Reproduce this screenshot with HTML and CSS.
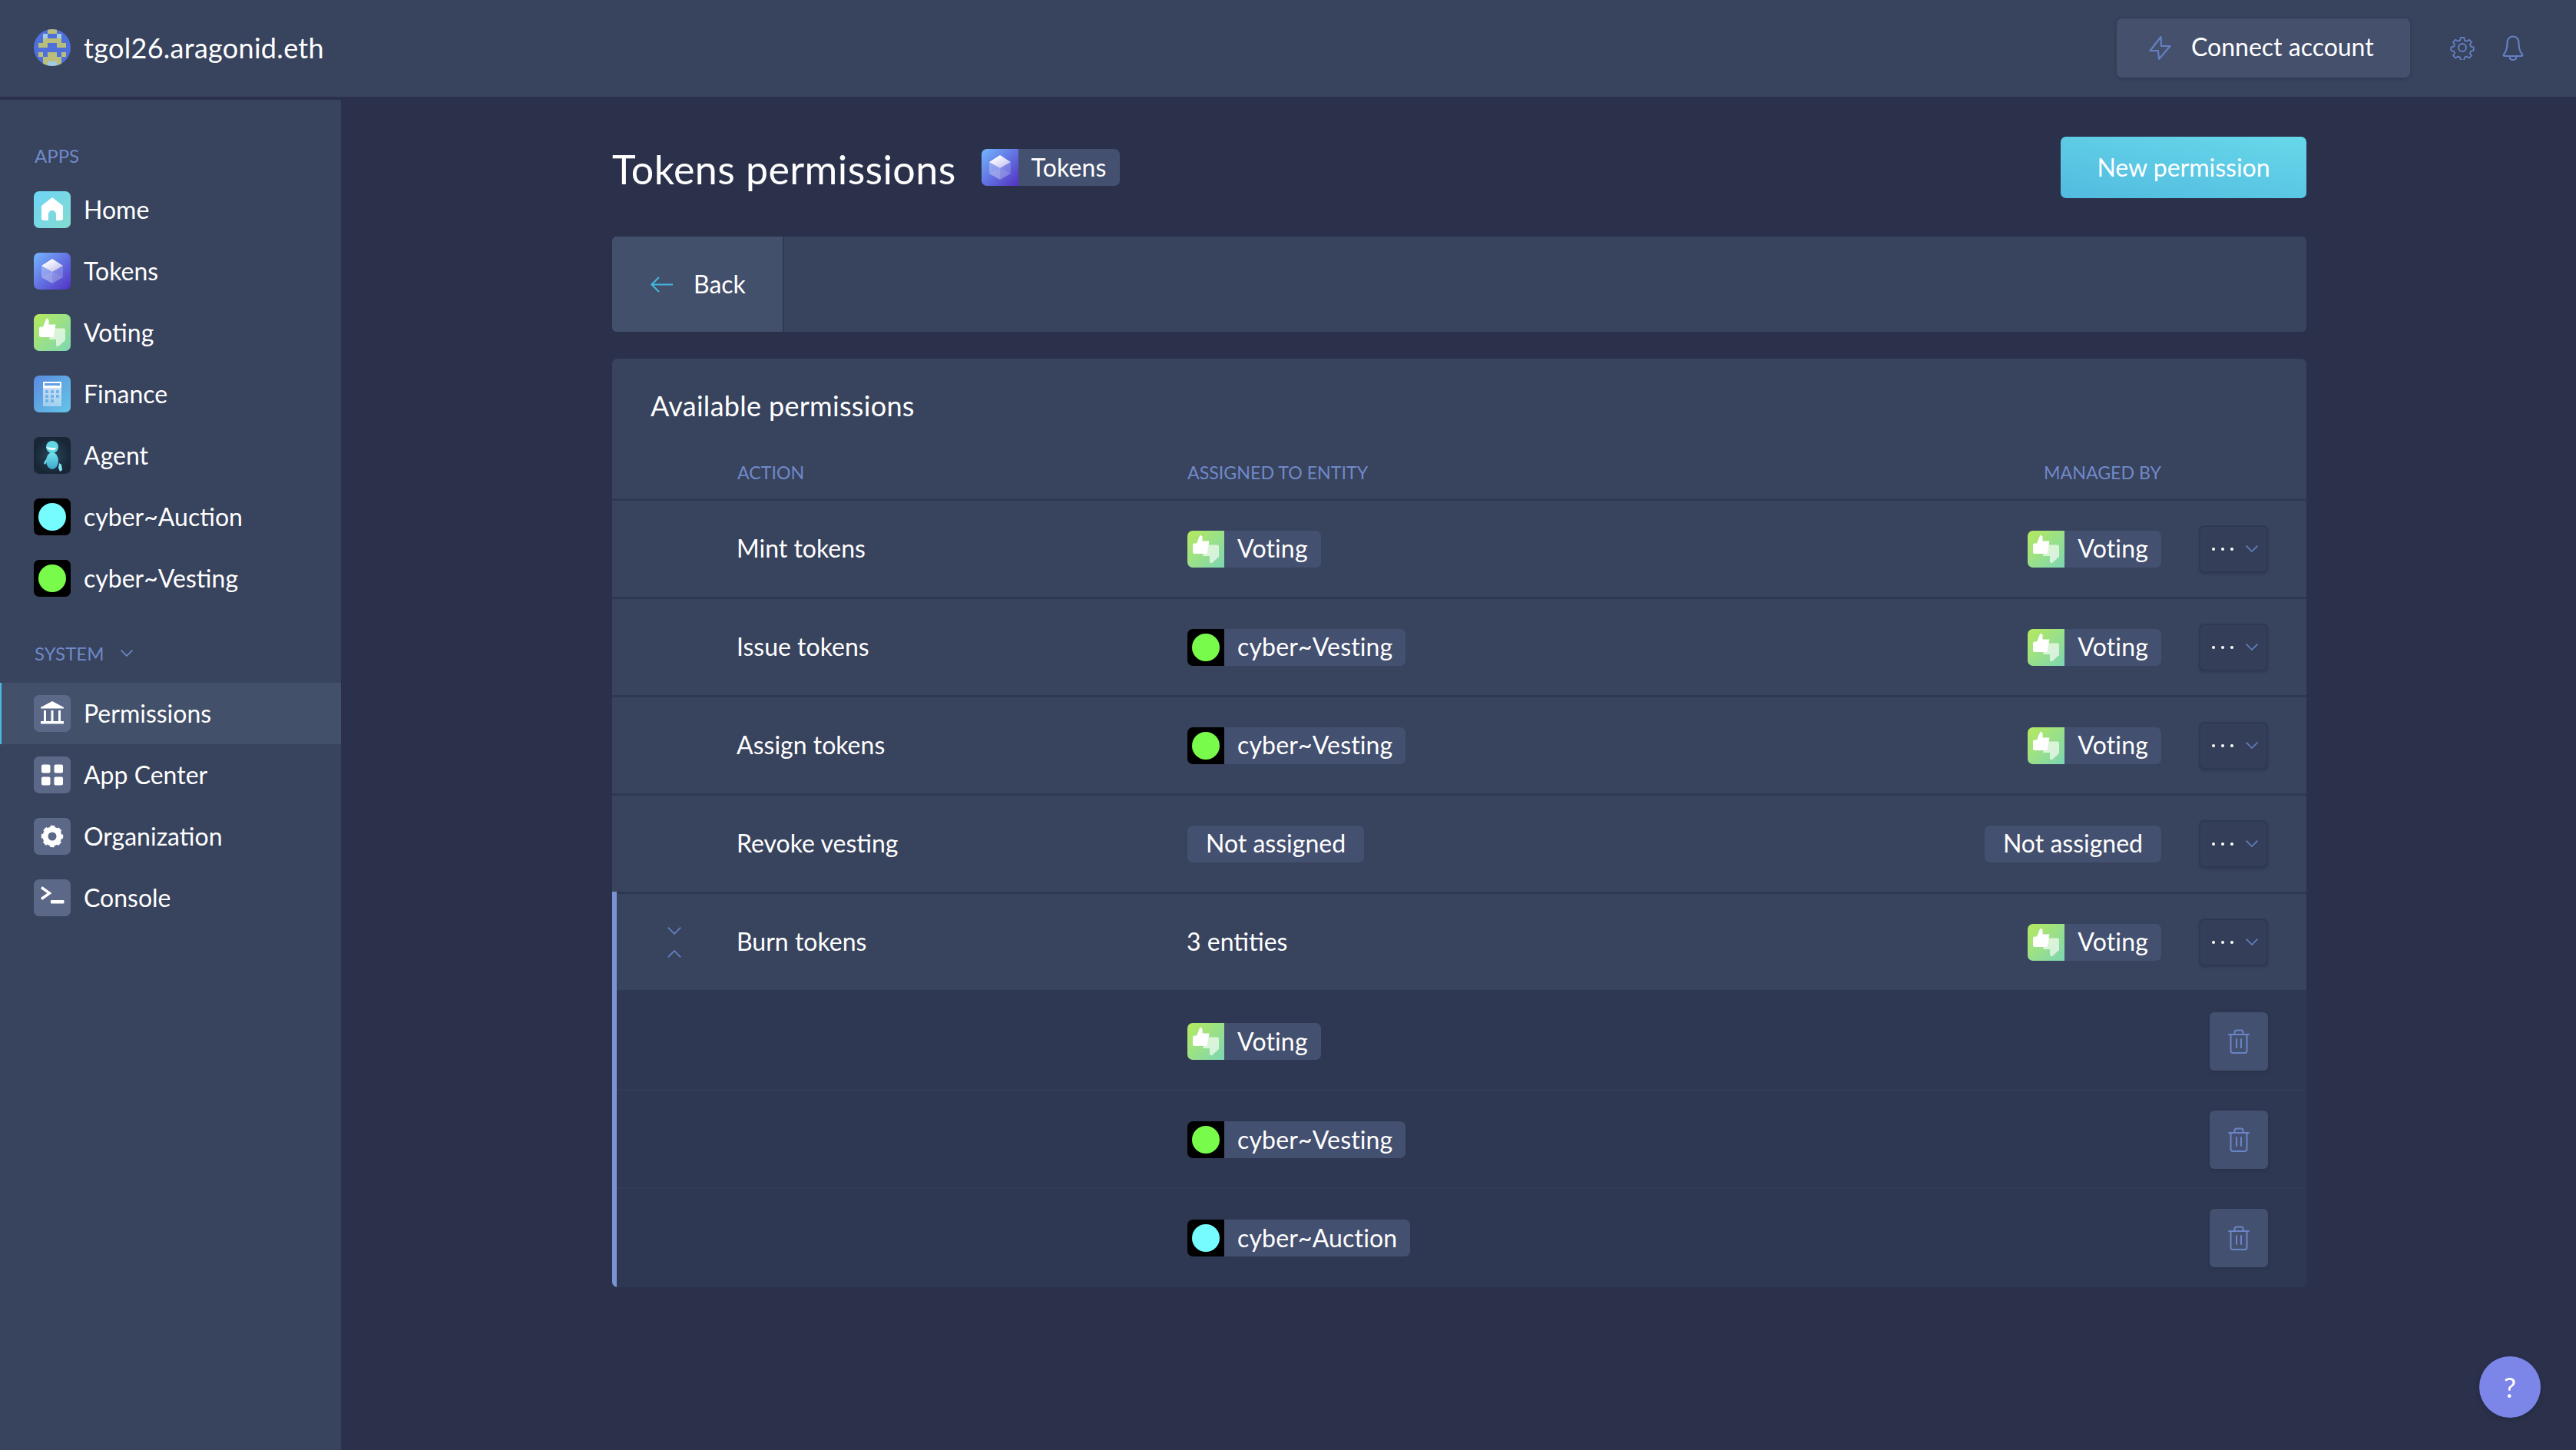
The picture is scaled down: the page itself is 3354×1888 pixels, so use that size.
FILE: index.html
```html
<!DOCTYPE html>
<html lang="en">
<head>
  <meta charset="UTF-8" />
  <title>Tokens permissions</title>
  <link rel="stylesheet" href="styles.css">
</head>
<body>
  <svg class="sprite" xmlns="http://www.w3.org/2000/svg">
    <defs>
      <linearGradient id="g-home" x1="0" y1="0" x2="1" y2="1"><stop offset="0" stop-color="#6dd5f6"/><stop offset="1" stop-color="#84dcd0"/></linearGradient>
      <linearGradient id="g-tokens" x1="0" y1="0" x2="1" y2="1"><stop offset="0" stop-color="#75b6ff"/><stop offset="1" stop-color="#5130c4"/></linearGradient>
      <linearGradient id="g-cube" x1="0" y1="0" x2="1" y2="1"><stop offset="0.2" stop-color="#fff"/><stop offset="1" stop-color="#b9b6ee"/></linearGradient>
      <linearGradient id="g-voting" x1="0" y1="0" x2="1" y2="1"><stop offset="0" stop-color="#b6ea5c"/><stop offset="1" stop-color="#7dd6b4"/></linearGradient>
      <linearGradient id="g-finance" x1="0" y1="0" x2="1" y2="1"><stop offset="0" stop-color="#5a8ae0"/><stop offset="1" stop-color="#64c6e6"/></linearGradient>
      <linearGradient id="g-calc" x1="0" y1="0" x2="0" y2="1"><stop offset="0" stop-color="#fff" stop-opacity=".75"/><stop offset="1" stop-color="#fff" stop-opacity=".4"/></linearGradient>
      <radialGradient id="g-agent"><stop offset="0" stop-color="#28475a"/><stop offset="1" stop-color="#182636"/></radialGradient>
      <linearGradient id="g-robot" x1="0" y1="0" x2="0" y2="1"><stop offset="0" stop-color="#6fe3ee"/><stop offset="1" stop-color="#3fa8cc"/></linearGradient>
    </defs>
    <symbol id="app-home" viewBox="0 0 48 48">
      <rect width="48" height="48" fill="url(#g-home)"/>
      <path fill="#fff" d="M24 8l14 11v16q0 3-3 3h-6v-8a5 5 0 0 0-10 0v8h-6q-3 0-3-3V19z"/>
    </symbol>
    <symbol id="app-tokens" viewBox="0 0 48 48">
      <rect width="48" height="48" fill="url(#g-tokens)"/>
      <path fill="url(#g-cube)" d="M24 8l14 9-14 8-14-8z"/>
      <path fill="#fff" fill-opacity=".28" d="M10 17l14 8v15l-14-8z"/>
      <path fill="#fff" fill-opacity=".18" d="M38 17l-14 8v15l14-8z"/>
      <path fill="#fff" fill-opacity=".1" d="M24 25l14 7-14 8-14-8z"/>
    </symbol>
    <symbol id="app-voting" viewBox="0 0 48 48">
      <rect width="48" height="48" fill="url(#g-voting)"/>
      <path fill="#fff" fill-opacity=".65" d="M23 18.500h16q2 0 2 2V34l-9.500 8.500-2.500-1.500V33H20z"/>
      <path fill="#fff" d="M16.500 5.500L19.500 7.500v6H28.500L25.500 30H9q-2 0-2-2V18.500q0-2 2-2h3z"/>
    </symbol>
    <symbol id="app-finance" viewBox="0 0 48 48">
      <rect width="48" height="48" fill="url(#g-finance)"/>
      <rect x="12" y="8" width="24" height="32" fill="url(#g-calc)"/>
      <path fill="#fff" d="M12 8h24v8H12z"/>
      <path fill="#5f9fe2" d="M14 10h20v3H14z"/>
      <path fill="#5ea6e2" fill-opacity=".75" d="M15 19h4v4h-4zM22 19h4v4h-4zM29 19h4v4h-4zM15 25h4v4h-4zM22 25h4v4h-4zM29 25h4v4h-4zM15 31h4v4h-4zM22 31h4v4h-4z"/>
    </symbol>
    <symbol id="app-agent" viewBox="0 0 48 48">
      <rect width="48" height="48" fill="url(#g-agent)"/>
      <ellipse cx="24" cy="31" rx="8" ry="11" fill="url(#g-robot)"/>
      <circle cx="24" cy="13" r="8" fill="#62d8e6"/>
      <path fill="#fff" d="M16 13q4 1 13 1-1 3-4 3-7 0-9-4z"/>
      <path fill="#7fe6f0" d="M13 34l3-5 1 1-2 6zM33 34l3 2 1 7-3 2-2-5z"/>
    </symbol>
    <symbol id="app-auction" viewBox="0 0 48 48">
      <rect width="48" height="48" fill="#000"/>
      <circle cx="24" cy="24" r="18" fill="#74fcff"/>
    </symbol>
    <symbol id="app-vesting" viewBox="0 0 48 48">
      <rect width="48" height="48" fill="#000"/>
      <circle cx="24" cy="24" r="18" fill="#79fb4c"/>
    </symbol>
    <symbol id="sys-permissions" viewBox="0 0 48 48">
      <path fill="#fff" d="M24 8l15 8v1.500H9V16zM13 20h3v14h-3zM22.500 20h3v14h-3zM32 20h3v14h-3zM9 34h30v3.500H9z"/>
    </symbol>
    <symbol id="sys-appcenter" viewBox="0 0 48 48">
      <rect x="10" y="10.500" width="11.500" height="11" rx="2" fill="#fff"/>
      <rect x="26.500" y="10.500" width="11.500" height="11" rx="2" fill="#fff"/>
      <rect x="10" y="26.500" width="11.500" height="11" rx="2" fill="#fff"/>
      <rect x="26.500" y="26.500" width="11.500" height="11" rx="2" fill="#fff"/>
    </symbol>
    <symbol id="sys-organization" viewBox="0 0 48 48">
      <circle cx="24" cy="24" r="9" fill="none" stroke="#fff" stroke-width="7"/>
      <circle cx="24" cy="24" r="12.500" fill="none" stroke="#fff" stroke-width="3.500" stroke-dasharray="5.600 4.220" stroke-dashoffset="2.800"/>
    </symbol>
    <symbol id="sys-console" viewBox="0 0 48 48">
      <path fill="none" stroke="#fff" stroke-width="3.400" d="M10 10.500L20.500 18 10 25.500"/>
      <rect x="22" y="27" width="17.500" height="4.500" rx="1" fill="#fff"/>
    </symbol>
    <symbol id="ico-caret" viewBox="0 0 16 9">
      <path fill="none" stroke="currentColor" stroke-width="1.600" d="M.6.6L8 8 15.400.6"/>
    </symbol>
    <symbol id="ico-trash" viewBox="0 0 28 32">
      <path fill="none" stroke="currentColor" stroke-width="2" stroke-linecap="round" d="M8.500 7V4q0-2.500 2.500-2.500h6q2.500 0 2.500 2.500v3M1 7h26M3.500 7v21q0 3 3 3h15q3 0 3-3V7M11 13v11M17 13v11"/>
    </symbol>
  </svg>

  <header class="topbar">
    <div class="identity">
      <svg class="identicon" viewBox="0 0 8 8" shape-rendering="crispEdges">
        <path fill="#4f6fda" d="M0 0h8v8H0z"/>
        <path fill="#b9bf7a" d="M3 0h2v1H3zM2 2h4v1H2zM1 3h2v1H1zM5 3h2v1H5zM1 5h1v1H1zM3 5h2v1H3zM6 5h1v1H6zM2 6h4v1H2zM2 7h1v1H2zM5 7h1v1H5z"/>
        <path fill="#a3cbe2" d="M2 1h1v1H2zM5 1h1v1H5zM3 7h2v1H3z"/>
      </svg>
      <span class="org-name">tgol26.aragonid.eth</span>
    </div>
    <div class="top-actions">
      <button class="connect">
        <svg class="connect-icon" viewBox="0 0 29 33"><path fill="none" stroke="currentColor" stroke-width="2.200" stroke-linejoin="round" d="M15.500 2L1.500 20h10.500L13 31 27.500 14H16z"/></svg>
        <span>Connect account</span>
      </button>
      <svg class="top-icon gear" viewBox="0 0 32 32"><g fill="none" stroke="currentColor" stroke-width="2" stroke-linejoin="round"><circle cx="16" cy="16" r="5"/><path d="M13.500 1.500h5l.8 4 3 1.300 3.500-2.300 3.500 3.500-2.300 3.500 1.300 3 4 .8v5l-4 .8-1.300 3 2.300 3.500-3.500 3.500-3.500-2.300-3 1.300-.8 4h-5l-.8-4-3-1.300-3.500 2.300-3.500-3.500 2.300-3.500-1.300-3-4-.8v-5l4-.8 1.300-3-2.300-3.500 3.500-3.500 3.500 2.300 3-1.300z" transform="translate(1.600 1.600) scale(.9)"/></g></svg>
      <svg class="top-icon bell" viewBox="0 0 28 33"><path fill="none" stroke="currentColor" stroke-width="2.200" stroke-linejoin="round" d="M14 1.500c-5 0-7.500 4-7.500 9 0 8-2 11-4.500 14.500-.6 1-.3 2 1 2h22c1.300 0 1.600-1 1-2-2.500-3.500-4.500-6.500-4.500-14.500 0-5-2.500-9-7.500-9zM9.500 27c0 3.500 2 5 4.500 5s4.500-1.500 4.500-5"/></svg>
    </div>
  </header>

  <div class="layout">
    <aside class="sidebar">
      <div class="nav-label first">APPS</div>
      <a class="nav-item"><svg class="tile"><use href="#app-home"/></svg><span>Home</span></a>
      <a class="nav-item"><svg class="tile"><use href="#app-tokens"/></svg><span>Tokens</span></a>
      <a class="nav-item"><svg class="tile"><use href="#app-voting"/></svg><span>Voting</span></a>
      <a class="nav-item"><svg class="tile"><use href="#app-finance"/></svg><span>Finance</span></a>
      <a class="nav-item"><svg class="tile"><use href="#app-agent"/></svg><span>Agent</span></a>
      <a class="nav-item"><svg class="tile"><use href="#app-auction"/></svg><span>cyber~Auction</span></a>
      <a class="nav-item"><svg class="tile"><use href="#app-vesting"/></svg><span>cyber~Vesting</span></a>
      <div class="nav-label system">SYSTEM <svg class="nav-caret"><use href="#ico-caret"/></svg></div>
      <a class="nav-item active"><svg class="tile sys"><use href="#sys-permissions"/></svg><span>Permissions</span></a>
      <a class="nav-item"><svg class="tile sys"><use href="#sys-appcenter"/></svg><span>App Center</span></a>
      <a class="nav-item"><svg class="tile sys"><use href="#sys-organization"/></svg><span>Organization</span></a>
      <a class="nav-item"><svg class="tile sys"><use href="#sys-console"/></svg><span>Console</span></a>
    </aside>

    <main class="content">
      <div class="wrap">
        <div class="page-head">
          <h1>Tokens permissions</h1>
          <span class="badge"><svg class="tile"><use href="#app-tokens"/></svg><span class="badge-text">Tokens</span></span>
          <button class="new-permission">New permission</button>
        </div>

        <div class="back-bar">
          <button class="back">
            <svg class="back-arrow" viewBox="0 0 29 21"><path fill="none" stroke="currentColor" stroke-width="2.200" d="M29 10.500H2M11 1L1.500 10.500 11 20"/></svg>
            <span>Back</span>
          </button>
        </div>

        <section class="card">
          <h2>Available permissions</h2>
          <div class="row head-row">
            <div></div>
            <div class="th">ACTION</div>
            <div class="th">ASSIGNED TO ENTITY</div>
            <div class="th right">MANAGED BY</div>
            <div></div>
          </div>

          <div class="row">
            <div></div>
            <div class="cell-text">Mint tokens</div>
            <div><span class="badge"><svg class="tile"><use href="#app-voting"/></svg><span class="badge-text">Voting</span></span></div>
            <div class="right"><span class="badge"><svg class="tile"><use href="#app-voting"/></svg><span class="badge-text">Voting</span></span></div>
            <div><button class="menu"><span class="dots"><i></i><i></i><i></i></span><svg class="menu-caret"><use href="#ico-caret"/></svg></button></div>
          </div>
          <div class="row">
            <div></div>
            <div class="cell-text">Issue tokens</div>
            <div><span class="badge"><svg class="tile"><use href="#app-vesting"/></svg><span class="badge-text">cyber~Vesting</span></span></div>
            <div class="right"><span class="badge"><svg class="tile"><use href="#app-voting"/></svg><span class="badge-text">Voting</span></span></div>
            <div><button class="menu"><span class="dots"><i></i><i></i><i></i></span><svg class="menu-caret"><use href="#ico-caret"/></svg></button></div>
          </div>
          <div class="row">
            <div></div>
            <div class="cell-text">Assign tokens</div>
            <div><span class="badge"><svg class="tile"><use href="#app-vesting"/></svg><span class="badge-text">cyber~Vesting</span></span></div>
            <div class="right"><span class="badge"><svg class="tile"><use href="#app-voting"/></svg><span class="badge-text">Voting</span></span></div>
            <div><button class="menu"><span class="dots"><i></i><i></i><i></i></span><svg class="menu-caret"><use href="#ico-caret"/></svg></button></div>
          </div>
          <div class="row">
            <div></div>
            <div class="cell-text">Revoke vesting</div>
            <div><span class="badge"><span class="badge-text">Not assigned</span></span></div>
            <div class="right"><span class="badge"><span class="badge-text">Not assigned</span></span></div>
            <div><button class="menu"><span class="dots"><i></i><i></i><i></i></span><svg class="menu-caret"><use href="#ico-caret"/></svg></button></div>
          </div>

          <div class="expanded">
            <div class="row">
              <div class="toggle">
                <svg class="toggle-caret"><use href="#ico-caret"/></svg>
                <svg class="toggle-caret up"><use href="#ico-caret"/></svg>
              </div>
              <div class="cell-text">Burn tokens</div>
              <div class="cell-text">3 entities</div>
              <div class="right"><span class="badge"><svg class="tile"><use href="#app-voting"/></svg><span class="badge-text">Voting</span></span></div>
              <div><button class="menu"><span class="dots"><i></i><i></i><i></i></span><svg class="menu-caret"><use href="#ico-caret"/></svg></button></div>
            </div>
            <div class="sub-row">
              <div></div>
              <div></div>
              <div><span class="badge"><svg class="tile"><use href="#app-voting"/></svg><span class="badge-text">Voting</span></span></div>
              <div></div>
              <div class="right"><button class="trash"><svg class="trash-icon"><use href="#ico-trash"/></svg></button></div>
            </div>
            <div class="sub-row">
              <div></div>
              <div></div>
              <div><span class="badge"><svg class="tile"><use href="#app-vesting"/></svg><span class="badge-text">cyber~Vesting</span></span></div>
              <div></div>
              <div class="right"><button class="trash"><svg class="trash-icon"><use href="#ico-trash"/></svg></button></div>
            </div>
            <div class="sub-row">
              <div></div>
              <div></div>
              <div><span class="badge"><svg class="tile"><use href="#app-auction"/></svg><span class="badge-text">cyber~Auction</span></span></div>
              <div></div>
              <div class="right"><button class="trash"><svg class="trash-icon"><use href="#ico-trash"/></svg></button></div>
            </div>
          </div>
        </section>
      </div>
    </main>
  </div>

  <button class="help">?</button>
</body>
</html>
```

FILE: styles.css
```css
* {
  box-sizing: border-box;
}
html, body {
  height: 100%;
}
body {
  margin: 0;
  background-color: #2b314b;
  color: #fff;
  font-family: 'Lato', 'Open Sans', sans-serif;
  font-size: 32px;
  overflow: hidden;
  display: flex;
  flex-direction: column;
}
button {
  font: inherit;
  color: inherit;
  border: none;
  padding: 0;
  cursor: pointer;
}
.sprite {
  display: block;
  width: 0;
  height: 0;
}

/* top bar */
.topbar {
  height: 126px;
  flex: none;
  background-color: #38435d;
  display: flex;
  align-items: center;
  justify-content: space-between;
  padding: 0 68px 2px 44px;
}
.identity {
  display: flex;
  align-items: center;
  gap: 17px;
}
.identicon {
  width: 48px;
  height: 48px;
  border-radius: 50%;
}
.org-name {
  font-size: 36px;
  letter-spacing: 0.3px;
}
.top-actions {
  display: flex;
  align-items: center;
}
.connect {
  width: 382px;
  height: 77px;
  border-radius: 7px;
  background-color: #44506c;
  box-shadow: 0 1px 5px rgba(30, 36, 60, 0.35);
  display: flex;
  align-items: center;
  padding-left: 42px;
  gap: 26px;
  margin-right: 52px;
}
.connect span {
  padding-bottom: 3px;
}
.connect-icon {
  width: 29px;
  height: 33px;
  color: #6480c2;
}
.top-icon {
  color: #6480c2;
}
.gear {
  width: 32px;
  height: 32px;
  margin-right: 36px;
}
.bell {
  width: 28px;
  height: 33px;
}

/* sidebar */
.layout {
  flex: 1;
  display: flex;
  min-height: 0;
}
.sidebar {
  width: 444px;
  flex: none;
  margin-top: 4px;
  background-color: #38435d;
}
.nav-label {
  font-size: 24px;
  color: #7089c9;
  padding-left: 45px;
  line-height: 30px;
}
.nav-label.first {
  padding-top: 58px;
  padding-bottom: 15px;
}
.nav-label.system {
  display: flex;
  align-items: center;
  height: 96px;
  padding-top: 19px;
}
.nav-caret {
  width: 16px;
  height: 9px;
  margin-left: 22px;
  color: #7089c9;
}
.nav-item {
  height: 80px;
  display: flex;
  align-items: center;
  gap: 17px;
  padding-left: 44px;
}
.nav-item span {
  padding-bottom: 2px;
}
.nav-item.active {
  background-color: #435069;
  box-shadow: inset 2px 0 0 #4cb8de;
}
.tile {
  width: 48px;
  height: 48px;
  flex: none;
  display: block;
}
.nav-item .tile {
  border-radius: 7px;
}
.tile.sys {
  background-color: #5b6888;
}

/* page */
.content {
  flex: 1;
  min-width: 0;
  padding: 52px 0 0 353px;
}
.wrap {
  width: 2206px;
}
.page-head {
  display: flex;
  align-items: center;
  height: 80px;
}
h1 {
  font-size: 52px;
  font-weight: 400;
  letter-spacing: 0.4px;
  margin: 4px 33px 0 0;
}
.page-head .badge-text {
  letter-spacing: 0;
  padding-right: 14px;
}
.new-permission {
  margin-left: auto;
  width: 320px;
  height: 80px;
  padding-bottom: 2px;
  border-radius: 7px;
  background: linear-gradient(190deg, #67d8ea, #52bbdf);
}
.badge {
  display: inline-flex;
  align-items: center;
  height: 48px;
  border-radius: 7px;
  overflow: hidden;
  background-color: #44506f;
  vertical-align: middle;
}
.badge-text {
  padding: 0 24px 2px;
}
.badge .tile + .badge-text {
  padding: 0 17px 2px 17px;
  letter-spacing: 0.15px;
}
.back-bar {
  height: 124px;
  margin-top: 50px;
  background-color: #38435d;
  border-radius: 6px;
  display: flex;
  overflow: hidden;
}
.back {
  width: 224px;
  background-color: #43506c;
  border-right: 2px solid #2f3953;
  display: flex;
  align-items: center;
  gap: 27px;
  padding-left: 50px;
}
.back span {
  padding-bottom: 2px;
}
.back-arrow {
  width: 29px;
  height: 21px;
  color: #45b5dd;
}

/* permissions table */
.card {
  margin-top: 35px;
  background-color: #38435d;
  border-radius: 7px;
  overflow: hidden;
}
h2 {
  font-size: 36px;
  font-weight: 400;
  letter-spacing: 0.3px;
  margin: 0;
  padding: 38px 50px 0;
  line-height: 46px;
}
.row, .sub-row {
  display: grid;
  grid-template-columns: 163px 586px 1fr 1fr 139px;
  align-items: center;
  padding-right: 50px;
  height: 128px;
  border-top: 3px solid #2f3852;
}
.head-row {
  height: 98px;
  border-top: none;
  padding-top: 30px;
}
.th {
  font-size: 23.2px;
  color: #7089c9;
}
.cell-text {
  padding-bottom: 2px;
  margin-left: -1px;
}
.right {
  text-align: right;
}
.menu {
  display: flex;
  align-items: center;
  gap: 16px;
  width: 90px;
  height: 62px;
  margin-left: auto;
  padding-left: 15px;
  background-color: #343e58;
  border: 2px solid #2f3852;
  border-radius: 7px;
  box-shadow: 0 2px 3px rgba(30, 36, 60, 0.25);
}
.dots {
  display: flex;
  gap: 8px;
}
.dots i {
  width: 4px;
  height: 4px;
  border-radius: 50%;
  background-color: #fff;
}
.menu-caret {
  width: 16px;
  height: 9px;
  color: #6480c2;
}
.expanded {
  border-left: 6px solid #7b93d4;
  background-color: #2f3852;
}
.expanded .row {
  background-color: #38435d;
  margin-bottom: 3px;
  grid-template-columns: 157px 586px 1fr 1fr 139px;
}
.expanded .sub-row {
  border-top: none;
  grid-template-columns: 157px 586px 1fr 1fr 139px;
  box-shadow: inset 0 -2px 0 #323b56;
}
.expanded .sub-row:last-child {
  box-shadow: none;
}
.toggle {
  display: flex;
  flex-direction: column;
  align-items: center;
  gap: 20px;
  width: 20px;
  margin-left: 65px;
}
.toggle-caret {
  width: 20px;
  height: 10px;
  color: #6480c2;
}
.toggle-caret.up {
  transform: scaleY(-1);
}
.trash {
  width: 76px;
  height: 76px;
  border-radius: 6px;
  background-color: #44506f;
  box-shadow: 0 2px 4px rgba(30, 36, 60, 0.3);
  display: inline-flex;
  align-items: center;
  justify-content: center;
  color: #6a84c6;
  vertical-align: middle;
}
.trash-icon {
  width: 28px;
  height: 32px;
}
.help {
  position: fixed;
  right: 46px;
  bottom: 42px;
  width: 80px;
  height: 80px;
  border-radius: 50%;
  background-color: #7c85e8;
  box-shadow: 0 2px 6px rgba(20, 25, 50, 0.3);
  font-size: 36px;
}
```
